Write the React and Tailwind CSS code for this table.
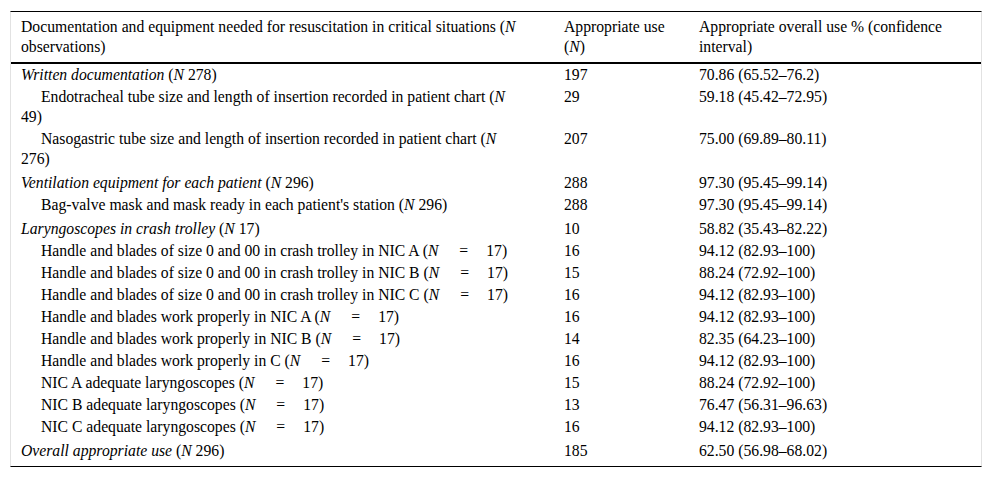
const N = () => <i>N</i>;

const Eq = ({ n }) => (
  <>
    (<N />
    <span className="ml-[21px] mr-[18px]">=</span>
    {n})
  </>
);

const rows = [
  { group: true, first: true, label: <><i>Written documentation</i> (<N /> 278)</>, use: "197", pct: "70.86 (65.52–76.2)" },
  { label: <>Endotracheal tube size and length of insertion recorded in patient chart (<N /> 49)</>, use: "29", pct: "59.18 (45.42–72.95)" },
  { label: <>Nasogastric tube size and length of insertion recorded in patient chart (<N /> 276)</>, use: "207", pct: "75.00 (69.89–80.11)" },
  { group: true, label: <><i>Ventilation equipment for each patient</i> (<N /> 296)</>, use: "288", pct: "97.30 (95.45–99.14)" },
  { label: <>Bag-valve mask and mask ready in each patient's station (<N /> 296)</>, use: "288", pct: "97.30 (95.45–99.14)" },
  { group: true, label: <><i>Laryngoscopes in crash trolley</i> (<N /> 17)</>, use: "10", pct: "58.82 (35.43–82.22)" },
  { label: <>Handle and blades of size 0 and 00 in crash trolley in NIC A <Eq n="17" /></>, use: "16", pct: "94.12 (82.93–100)" },
  { label: <>Handle and blades of size 0 and 00 in crash trolley in NIC B <Eq n="17" /></>, use: "15", pct: "88.24 (72.92–100)" },
  { label: <>Handle and blades of size 0 and 00 in crash trolley in NIC C <Eq n="17" /></>, use: "16", pct: "94.12 (82.93–100)" },
  { label: <>Handle and blades work properly in NIC A <Eq n="17" /></>, use: "16", pct: "94.12 (82.93–100)" },
  { label: <>Handle and blades work properly in NIC B <Eq n="17" /></>, use: "14", pct: "82.35 (64.23–100)" },
  { label: <>Handle and blades work properly in C <Eq n="17" /></>, use: "16", pct: "94.12 (82.93–100)" },
  { label: <>NIC A adequate laryngoscopes <Eq n="17" /></>, use: "15", pct: "88.24 (72.92–100)" },
  { label: <>NIC B adequate laryngoscopes <Eq n="17" /></>, use: "13", pct: "76.47 (56.31–96.63)" },
  { label: <>NIC C adequate laryngoscopes <Eq n="17" /></>, use: "16", pct: "94.12 (82.93–100)" },
  { group: true, last: true, label: <><i>Overall appropriate use</i> (<N /> 296)</>, use: "185", pct: "62.50 (56.98–68.02)" },
];

export default function App() {
  return (
    <div className="min-h-screen bg-white px-[10px] pt-[11px] font-['Liberation_Serif','Times_New_Roman',serif] text-[15.7px] leading-[20px] text-black">
      <div className="border-x border-t border-b border-x-[#e2e2e2] border-t-black border-b-black">
        <table className="w-full table-fixed border-collapse">
          <colgroup>
            <col className="w-[543px]" />
            <col className="w-[135px]" />
            <col />
          </colgroup>
          <thead>
            <tr className="border-b-2 border-black text-left align-top">
              <th className="pl-[10px] pr-[26px] py-[5px] font-normal">
                Documentation and equipment needed for resuscitation in critical situations (<N /> observations)
              </th>
              <th className="px-[10px] py-[5px] font-normal">
                Appropriate use (<N />)
              </th>
              <th className="px-[10px] py-[5px] font-normal">
                Appropriate overall use % (confidence interval)
              </th>
            </tr>
          </thead>
          <tbody>
            {rows.map((r, i) => {
              const pad = r.group
                ? r.first
                  ? "pt-px pb-px"
                  : r.last
                    ? "pt-[3px] pb-[5px]"
                    : "pt-[3px] pb-px"
                : "pt-px pb-px";
              return (
                <tr key={i} className="align-top">
                  <td className={`pl-[10px] pr-[34px] ${pad} ${r.group ? "" : "indent-5"}`}>{r.label}</td>
                  <td className={`px-[10px] ${pad}`}>{r.use}</td>
                  <td className={`px-[10px] ${pad}`}>{r.pct}</td>
                </tr>
              );
            })}
          </tbody>
        </table>
      </div>
    </div>
  );
}
